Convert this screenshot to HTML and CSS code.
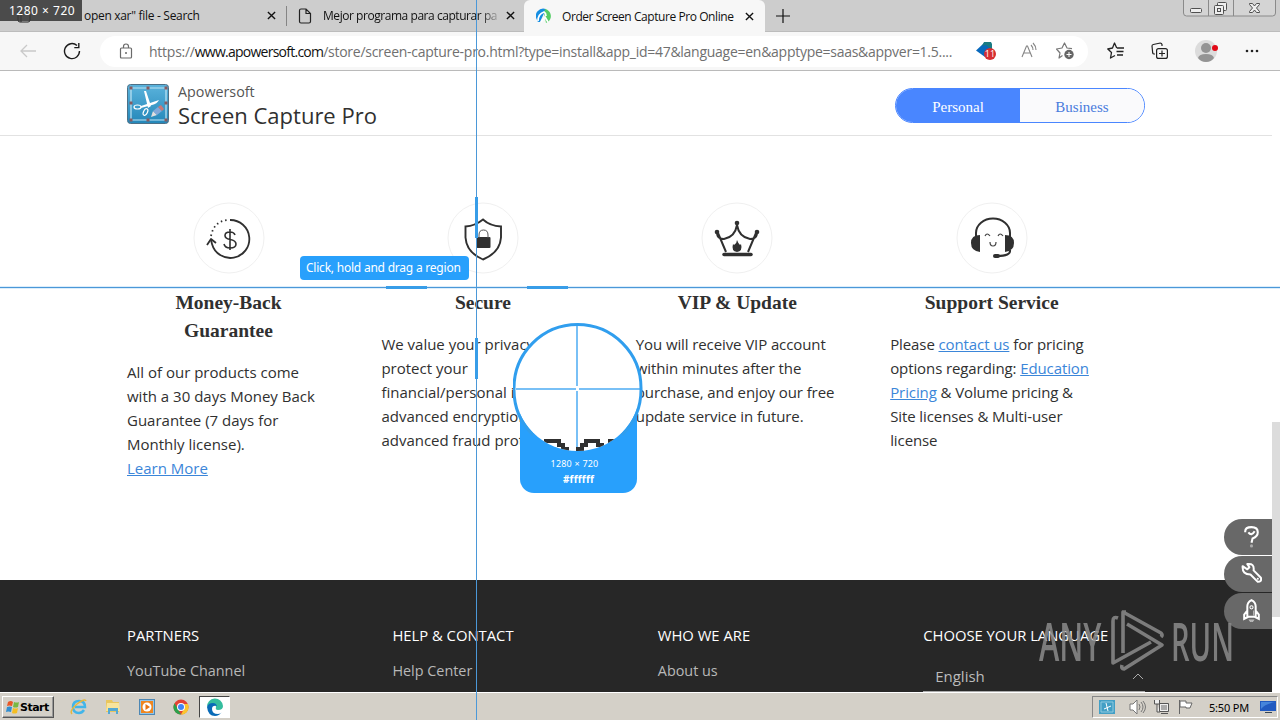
FILE: index.html
```html
<!DOCTYPE html>
<html lang="en">
<head>
  <meta charset="UTF-8">
  <title>Order Screen Capture Pro Online</title>
  <link rel="stylesheet" href="styles.css">
</head>
<body>

  <div class="tabbar">
    <div class="tab tab-first">
      <svg class="tab-actions" width="16" height="16" viewBox="0 0 16 16"><path d="M2 3v9q0 2 2 2h8q2 0 2-2V3M5 3v11" fill="none" stroke="#222"/></svg>
      <span class="tab-title t1">open xar" file - Search</span>
      <svg class="x" viewBox="0 0 10 10"><path d="M1 1l8 8M9 1l-8 8"/></svg>
    </div>
    <div class="tab tab-second">
      <svg width="14" height="16" viewBox="0 0 14 16"><path d="M1.500 2.500q0-1.500 1.500-1.500h5l4.500 4.500v8q0 1.500-1.500 1.500h-8q-1.500 0-1.500-1.500zM8 1v4.500h4.500" fill="none" stroke="#222" stroke-width="1.200"/></svg>
      <span class="tab-title t2">Mejor programa para capturar pa</span>
      <svg class="x" viewBox="0 0 10 10"><path d="M1 1l8 8M9 1l-8 8"/></svg>
    </div>
    <div class="tab tab-active">
      <svg width="16" height="16" viewBox="0 0 16 16"><path d="M1 12A7.500 7.500 0 0 1 10 1L4 14Q1 14 1 12z" fill="#168ee2"/><path d="M9 1a7.300 7.300 0 0 1 4 12l-3 2L8 5z" fill="#54cd65"/><path d="M2 13q0-7 6-9 2 1 2 4M5 14l4-5 3 5" fill="none" stroke="#fff" stroke-width="1.700"/></svg>
      <span class="tab-title t3">Order Screen Capture Pro Online</span>
      <svg class="x" viewBox="0 0 10 10"><path d="M1 1l8 8M9 1l-8 8"/></svg>
    </div>
    <svg class="new-tab" width="14" height="14" viewBox="0 0 14 14"><path d="M7 0v14M0 7h14" stroke="#111" stroke-width="1.200"/></svg>
    <svg class="window-buttons" width="94" height="17" viewBox="0 0 94 17">
      <path d="M.5 0v13q0 3 3 3h86q3 0 3-3V0M25.500 0v16M50.500 0v16" fill="#d4d4d4" stroke="#8a8a8a"/>
      <g fill="#eee" stroke="#505050"><rect x="7.500" y="8.500" width="11" height="4" rx="1"/><rect x="34.500" y="2.500" width="9" height="8" rx="1"/><rect x="31.500" y="5.500" width="9" height="9" rx="1"/><rect x="34.500" y="8.500" width="3" height="3"/><path d="M66.500 3.500h3l2 2.500 2-2.500h3v1l-3 3.500 3 3.500v1h-3l-2-2.500-2 2.500h-3v-1l3-3.500-3-3.500z"/></g>
    </svg>
  </div>

  <div class="toolbar">
    <svg class="back" width="18" height="16" viewBox="0 0 18 16"><path d="M17 8H2M8 2L2 8l6 6" fill="none" stroke="#c9c9c9" stroke-width="1.300"/></svg>
    <svg class="reload" width="18" height="18" viewBox="0 0 18 18"><path d="M16.500 9A7.500 7.500 0 1 1 14 3.500M15.800 1v4.600h-4.500" fill="none" stroke="#1c1c1c" stroke-width="1.400"/></svg>
    <div class="address">
      <svg class="lock" width="14" height="16" viewBox="0 0 14 16"><path d="M2.500 5h9q1 0 1 1v8q0 1-1 1h-9q-1 0-1-1V6q0-1 1-1zM4.500 5V3.500a2.500 2.500 0 0 1 5 0V5" fill="none" stroke="#6a6a6a" stroke-width="1.200"/><circle cx="7" cy="10" r="1" fill="#6a6a6a"/></svg>
      <span class="url"><span class="u1">https://</span><b class="u2">www.apowersoft.com</b><span class="u3">/store/screen-capture-pro.html?type=install&amp;app_id=47&amp;language=en&amp;apptype=saas&amp;appver=1.5....</span></span>
      <svg class="shopping" width="22" height="20" viewBox="0 0 22 20"><path d="M8 2h6l2 2v12H9L0 9.500z" fill="#0869bd"/><path d="M8 1h7l1 2v6l-6-5-4 1z" fill="#197b83"/><circle cx="14" cy="13" r="6" fill="#d52e32"/><text x="14" y="16" class="count">11</text></svg>
      <svg class="read-aloud" width="18" height="18" viewBox="0 0 18 18"><path d="M2 15L6.500 4h1L12 15M3.500 11h7M11 3q2 2 2 5M13 1q3 3 3 7" fill="none" stroke="#858585" stroke-width="1.100"/></svg>
      <svg class="fav-add" width="18" height="18" viewBox="0 0 18 18"><path d="M6.500 13.500L3 16l1-5-3.500-4L6 6l2.500-5L11 6l5 .7" fill="none" stroke="#777" stroke-width="1.200" stroke-linejoin="round"/><circle cx="13" cy="12.500" r="4.700" fill="#666"/><path d="M13 10v5M10.500 12.500h5" stroke="#fff"/></svg>
    </div>
    <svg class="favs" width="18" height="18" viewBox="0 0 18 18"><path d="M10 5.500H9.500L7.500 1 5.500 6 .8 7l3.700 3.500L3.500 16 8 13.500M10 6h7M9.500 9.500h7M10 13h6" fill="none" stroke="#222" stroke-width="1.300" stroke-linejoin="round"/></svg>
    <svg class="collections" width="18" height="18" viewBox="0 0 18 18"><path d="M4 12H3q-1 0-1.300-1L1 4q0-1.200 1.300-1.500l7-1.500q1.300 0 1.700 1.500V4" fill="none" stroke="#222" stroke-width="1.200"/><rect x="5.600" y="6.600" width="10.800" height="9.800" rx="2" fill="none" stroke="#222" stroke-width="1.200"/><path d="M11 8.500v6M8 11.500h6" stroke="#222" stroke-width="1.200"/></svg>
    <svg class="avatar" width="24" height="22" viewBox="0 0 24 22"><circle cx="11" cy="11" r="11" fill="#dcdcdc"/><circle cx="11" cy="8" r="5" fill="#949494"/><path d="M3 18q1-4 8-4t8 4q-3 4-8 4t-8-4z" fill="#949494"/><circle cx="20" cy="8" r="3" fill="#e20a17"/></svg>
    <svg class="dots" width="16" height="4" viewBox="0 0 16 4"><g fill="#222"><circle cx="3" cy="2" r="1.300"/><circle cx="8" cy="2" r="1.300"/><circle cx="13" cy="2" r="1.300"/></g></svg>
  </div>

  <div class="viewport">
    <div class="page">
      <header class="header">
        <svg class="logo" width="42" height="40" viewBox="0 0 42 40">
          <defs><linearGradient id="blue" x2="0" y2="1"><stop stop-color="#5bb3dc"/><stop offset="1" stop-color="#2487b9"/></linearGradient></defs>
          <rect x=".5" y=".5" width="41" height="39" rx="3" fill="url(#blue)" stroke="#4c7087"/>
          <path d="M4 4h35v32H4z" fill="none" stroke="#c0e4f3" stroke-width="1.200"/>
          <path d="M17 7l2 0 5 15-3 2zM32 16q-2 4-7 5l-11 3v-2z" fill="#fff"/>
          <ellipse cx="10.500" cy="23" rx="3.500" ry="2" fill="none" stroke="#fff" stroke-width="1.200"/><ellipse cx="18.500" cy="28" rx="2" ry="3.500" transform="rotate(25 18.500 28)" fill="none" stroke="#fff" stroke-width="1.200"/>
          <path d="M24 33l2-6 4 4z" fill="#e1dede"/><path d="M26 27l5-4 4 4-5 4z" fill="#82a8d9"/><path d="M31 23l3-2 3 4-2 2z" fill="#c97876"/>
          <g fill="#875b60"><path d="M2.500 2.500h3v3h-3zM19.500 2.500h3v3h-3zM37.500 2.500h3v3h-3zM2.500 17.500h3v3h-3zM37.500 17.500h3v3h-3zM2.500 34.500h3v3h-3zM19.500 34.500h3v3h-3zM37.500 34.500h3v3h-3z"/></g>
        </svg>
        <div class="brand">
          <div class="company">Apowersoft</div>
          <div class="product">Screen Capture Pro</div>
        </div>
        <div class="switch"><span class="personal">Personal</span><span class="business">Business</span></div>
      </header>

      <section class="features">
        <div class="feature">
          <svg class="feature-icon" viewBox="0 0 72 72"><circle cx="36" cy="36" r="35" class="ring"/><g fill="none" stroke="#303030" stroke-width="1.800"><path d="M37 18a19 19 0 1 1-18 24L18 38"/><path d="M14 43l4-6 5 4" stroke-linejoin="round"/><path d="M18 34Q21 19 35 18" stroke-dasharray="1.500 3"/><path d="M42 33q-1-3-5-3-5 0-5 3.500 0 3 5 4 6 1 6 4.500 0 4-6 4-5 0-6-4M37 27v21" stroke-width="1.600"/></g></svg>
          <h3>Money-Back<br>Guarantee</h3>
          <p>All of our products come<br>with a 30 days Money Back<br>Guarantee (7 days for<br>Monthly license).<br><a href="#">Learn More</a></p>
        </div>
        <div class="feature">
          <svg class="feature-icon" viewBox="0 0 72 72"><circle cx="36" cy="36" r="35" class="ring"/><path d="M36 17.500Q28 24 18.500 24.500v11q1 15 17.500 22 17-7 18-22v-11Q43 24 36 17.500z" fill="none" stroke="#303030" stroke-width="1.900"/><rect x="29.500" y="35" width="14" height="11" rx="1" fill="#303030"/><path d="M32 36v-3q0-5 4.500-5t4.500 5v3" fill="none" stroke="#555"/></svg>
          <h3>Secure</h3>
          <p>We value your privacy and<br>protect your<br>financial/personal info with<br>advanced encryption and<br>advanced fraud protection.</p>
        </div>
        <div class="feature feature-tight">
          <svg class="feature-icon" viewBox="0 0 72 72"><circle cx="36" cy="36" r="35" class="ring"/><g fill="#303030"><circle cx="36" cy="21" r="2.300"/><circle cx="16" cy="30" r="2.300"/><circle cx="56" cy="30" r="2.300"/><path d="M36 38q1 3 3 5l1-1q2 7-4 8-6-1-4-8l1 1q3-2 3-5z"/></g><path d="M17 31l8 19M16 32q1 5 7 5 11-2 13-14 2 12 13 14 6 0 7-5M55 31l-8 19" fill="none" stroke="#303030" stroke-width="2"/><path d="M23 52.500h27" stroke="#303030" stroke-width="3.500" stroke-linecap="round"/></svg>
          <h3>VIP &amp; Update</h3>
          <p>You will receive VIP account<br>within minutes after the<br>purchase, and enjoy our free<br>update service in future.</p>
        </div>
        <div class="feature feature-tight">
          <svg class="feature-icon" viewBox="0 0 72 72"><circle cx="36" cy="36" r="35" class="ring"/><path d="M20 35v-4a17 14.500 0 0 1 34 0v4M54 48q1 6-13 6" fill="none" stroke="#303030" stroke-width="2"/><g fill="#303030"><path d="M24 33v17q-9-1-9-9t9-8zM49 33v17q9-1 9-9t-9-8z"/><rect x="37" y="52" width="7" height="4" rx="2"/></g><path d="M29 34q2-4 5 0M42 34q2-4 5 0M34 40q0 4 3 4t3-4" fill="none" stroke="#444" stroke-width="1.200"/></svg>
          <h3>Support Service</h3>
          <p>Please <a href="#">contact us</a> for pricing<br>options regarding: <a href="#">Education</a><br><a href="#">Pricing</a> &amp; Volume pricing &amp;<br>Site licenses &amp; Multi-user<br>license</p>
        </div>
      </section>

      <footer class="footer">
        <div class="footer-col"><h4>PARTNERS</h4><a href="#">YouTube Channel</a></div>
        <div class="footer-col"><h4>HELP &amp; CONTACT</h4><a href="#">Help Center</a></div>
        <div class="footer-col"><h4>WHO WE ARE</h4><a href="#">About us</a></div>
        <div class="footer-col"><h4>CHOOSE YOUR LANGUAGE</h4>
          <div class="language"><span>English</span><svg width="12" height="8" viewBox="0 0 12 8"><path d="M1 7l5-5 5 5" fill="none" stroke="#aaa"/></svg></div>
        </div>
      </footer>
    </div>
    <div class="scrollbar"><div class="thumb"></div></div>
  </div>

  <div class="taskbar">
    <div class="start">
      <svg width="15" height="15" viewBox="0 0 15 15"><path d="M3 2q3-2 5 0L7 6Q4 5 2 6z" fill="#e95726"/><path d="M9 2q3 1 5 0l-1 5q-3 1-5 0z" fill="#78b842"/><path d="M2 7q3-1 5 0l-1 5q-3-1-5 0z" fill="#318ed1"/><path d="M8 8q3 1 5 0l-1 5q-3 1-5 0z" fill="#f5be22"/></svg>
      <span>Start</span>
    </div>
    <svg class="launch" width="18" height="18" viewBox="0 0 18 18"><path d="M14 12q-2 3-5 3-6 0-6-6t6-6q6 0 6 6H5" fill="none" stroke="#42b5e9" stroke-width="2.500"/><path d="M2 16Q-1 13 7 6q8-6 9-3" fill="none" stroke="#e7b73c" stroke-width="1.500"/></svg>
    <svg class="launch" width="18" height="18" viewBox="0 0 18 18"><path d="M2 2h6l1 2h6v10H2z" fill="#e9c65e"/><path d="M3 5h12l1 8H2z" fill="#f8e49c"/><path d="M4 10h10v6h-2v-3H6v3H4z" fill="#55a9d3"/></svg>
    <svg class="launch" width="18" height="18" viewBox="0 0 18 18"><rect x="1.500" y="1.500" width="15" height="15" fill="#91c5ea" stroke="#4d87b4"/><rect x="3" y="3" width="12" height="12" fill="#ef8620"/><circle cx="9" cy="9" r="4.500" fill="#fff"/><path d="M7.500 6l4.500 3-4.500 3z" fill="#e67312"/></svg>
    <svg class="launch" width="18" height="18" viewBox="0 0 18 18"><circle cx="9" cy="9" r="7.500" fill="#e44235"/><path d="M2.500 5.200L7 13l2 3.500A7.500 7.500 0 0 1 2.500 5.200z" fill="#2aa14c"/><path d="M9 16.500L13 9l-1-3h4a7.500 7.500 0 0 1-7 10.500z" fill="#fbc62e"/><circle cx="9" cy="9" r="4" fill="#fff"/><circle cx="9" cy="9" r="3" fill="#4285f4"/></svg>
    <div class="running"><svg width="18" height="18" viewBox="0 0 18 18"><path d="M1 9a8 8 0 0 1 16-1q0 4-5 4-3 0-2-3 0-3-4-3-4 0-5 3z" fill="#35bd9e"/><path d="M1 9q1-4 6-4 3 0 4 3-5-1-5 3 0 5 6 5 3 0 4-2-3 4-7 4-7 0-8-9z" fill="#096bb7"/></svg></div>
    <div class="tray">
      <svg width="16" height="16" viewBox="0 0 16 16"><path d="M0 1h16v14H0z" fill="#439fc5"/><path d="M2 3h12v10H2z" fill="none" stroke="#91cadf"/><path d="M7 4l2 8M12 7l-7 3" stroke="#fff"/></svg>
      <svg class="speaker" width="18" height="16" viewBox="0 0 18 16"><path d="M1 5h3l4-4v14l-4-4H1z" fill="#fff" stroke="#777"/><path d="M10 5q2 3 0 6M12 3q4 5 0 10M14 2q5 6 0 12" fill="none" stroke="#777"/></svg>
      <svg class="network" width="17" height="16" viewBox="0 0 17 16"><path d="M6.500 4.500h9v8h-9zM8 14.500h7M1.500 1v4h5V1M4 5v8h3" fill="#eee" stroke="#555"/><path d="M8 6h6v5H8z" fill="#aaa"/></svg>
      <svg class="flag" width="17" height="16" viewBox="0 0 17 16"><path d="M2.500 1v14M3 2h6v2h6l-2 5H9V8H3z" fill="#fff" stroke="#666"/></svg>
      <span class="clock">5:50 PM</span>
      <svg class="desktop" width="16" height="14" viewBox="0 0 16 14"><path d="M0 1h16v10H0z" fill="#225ac0"/><path d="M1 2h14Q5 4 1 9z" fill="#4785db"/><path d="M5 12h7v1H5z" fill="#345"/></svg>
    </div>
  </div>

  <div class="side-buttons">
    <div><svg viewBox="0 0 20 22"><path d="M4 7V6q0-4 6-4t6 5q0 4-5 6l-1 4M7 7q3 4 6-1" fill="none" stroke="#fff" stroke-width="2"/><circle cx="10" cy="20" r="1.500" fill="#aaa"/></svg></div>
    <div><svg viewBox="0 0 20 22"><path d="M1.500 4l4.500 3 2-2-2-3q7-1 6 6l7 7q1 4-3 4l-7-7Q1 12 1.500 4z" fill="none" stroke="#fff" stroke-width="1.900" stroke-linejoin="round"/><circle cx="16" cy="16" r="1" fill="#fff"/></svg></div>
    <div><svg viewBox="0 0 20 22"><path d="M6 17V7q0-4 4-6 4 2 4 6v10M6 11l-3 4v4l4-2h6l4 2v-4l-3-4" fill="none" stroke="#fff" stroke-width="1.900"/><circle cx="10" cy="8" r="1.500" fill="none" stroke="#fff"/><path d="M12 11v5M8 20h4l-2 3z" fill="#aaa" stroke="#bbb"/></svg></div>
  </div>

  <div class="watermark">
    <span class="any">ANY</span>
    <svg width="56" height="64" viewBox="0 0 56 64"><path d="M8 9q-5-2-5 3v42l38-21M13 44V3l38 21q2 2 0 4M17 15l35 21-38 24q-3 0-2-4M12 3l4 0" fill="none" stroke="#8b8b8b" stroke-width="3.600" stroke-linejoin="round"/></svg>
    <span class="run">RUN</span>
  </div>

  <div class="line-v"></div>
  <div class="line-h"></div>
  <div class="mark mark-top"></div>
  <div class="mark mark-bottom"></div>
  <div class="mark mark-left"></div>
  <div class="mark mark-right"></div>
  <div class="size-badge">1280 × 720</div>
  <div class="hint"><span>Click, hold and drag a region</span></div>
  <div class="loupe">
    <div class="loupe-info"><span>1280 × 720</span><b>#ffffff</b></div>
    <svg class="lens" width="130" height="130" viewBox="0 0 130 130">
      <defs><clipPath id="glass"><circle cx="64.500" cy="65" r="63"/></clipPath></defs>
      <circle cx="64.500" cy="65" r="63" fill="#fff"/>
      <path d="M64 3v60M64 68v60M3 66h60M66 66h61" stroke="#79c0f6" stroke-width="2"/>
      <path d="M20 112A64 64 0 0 1 1 65a63.500 63.500 0 0 1 127 0 64 64 0 0 1-19 47" fill="none" stroke="#309eee" stroke-width="3"/>
      <g clip-path="url(#glass)"><path d="M31 116h17v4h4v4h4v5h-8v-5h-4v-4H31zM71 116h16v4h4v9h-4v-5h-4v-4h-8v4h-4v5h-8v-5h4v-4h4zM95 116h16v4H95z" fill="#303030"/></g>
    </svg>
  </div>
</body>
</html>
```
FILE: styles.css
```css
* {
  box-sizing: border-box;
}

body {
  margin: 0;
  width: 1280px;
  height: 720px;
  overflow: hidden;
  display: flex;
  flex-direction: column;
  font-family: "Open Sans", sans-serif;
  color: #303030;
  background: #fff;
}

svg {
  display: block;
  flex: none;
}

a {
  color: #3b86d9;
}

/* browser chrome */
.tabbar {
  height: 32px;
  display: flex;
  align-items: center;
  background: #cdcdcd;
  border-bottom: 1px solid #bcbcbc;
  flex: none;
}

.tab {
  height: 31px;
  display: flex;
  align-items: center;
  font-size: 12px;
  color: #111;
}

.tab-first {
  width: 287px;
  padding-left: 16px;
  border-right: 1px solid #858585;
  height: 20px;
}

.tab-first .tab-title {
  margin-left: 52px;
}

.tab-second {
  width: 237px;
  padding-left: 11px;
}

.tab-second .tab-title {
  margin-left: 11px;
  -webkit-mask-image: linear-gradient(to right, #000 86%, transparent 98%);
  mask-image: linear-gradient(to right, #000 86%, transparent 98%);
}

.tab-active {
  width: 241px;
  height: 32px;
  margin-bottom: -1px;
  padding-left: 12px;
  background: #f7f7f7;
  border-radius: 6px 6px 0 0;
}

.tab-active .tab-title {
  margin-left: 10px;
}

.tab-title {
  white-space: nowrap;
  flex: none;
}

.t1 {
  width: 183px;
  letter-spacing: -0.3px;
}

.t2 {
  width: 183px;
  letter-spacing: -0.45px;
}

.t3 {
  width: 183px;
  letter-spacing: -0.43px;
}

.x {
  width: 9px;
  height: 9px;
  stroke: #111;
  stroke-width: 1.5;
}

.new-tab {
  margin-left: 11px;
}

.window-buttons {
  margin: 0 3px 14px auto;
}

.toolbar {
  height: 39px;
  display: flex;
  align-items: center;
  background: #f7f7f7;
  border-bottom: 1px solid #bababa;
  flex: none;
}

.back {
  margin-left: 19px;
}

.reload {
  margin-left: 26px;
}

.address {
  width: 988px;
  height: 31px;
  margin-left: 19px;
  padding-left: 19px;
  display: flex;
  align-items: center;
  background: #fff;
  border-radius: 16px;
}

.url {
  width: 814px;
  margin-left: 16px;
  margin-right: 13px;
  font-size: 14px;
  white-space: nowrap;
  color: #707070;
}

.url b {
  font-weight: normal;
  color: #111;
}

.u1 { letter-spacing: -0.25px; }
.u2 { letter-spacing: -0.75px; }
.u3 { letter-spacing: -0.27px; }

.count {
  fill: #fff;
  font-size: 9px;
  text-anchor: middle;
}

.read-aloud {
  margin-left: 22px;
}

.fav-add {
  margin-left: 18px;
}

.favs {
  margin-left: 19px;
}

.collections {
  margin-left: 26px;
}

.avatar {
  margin-left: 26px;
}

.dots {
  margin-left: 25px;
}

/* page */
.viewport {
  flex: 1;
  display: flex;
  min-height: 0;
}

.page {
  width: 1272px;
}

.header {
  height: 65px;
  padding: 13px 127px 0;
  display: flex;
  border-bottom: 1px solid #e2e2e2;
}

.brand {
  margin: -1px 0 0 9px;
}

.company {
  font-size: 14.3px;
  line-height: 18px;
  color: #555;
}

.product {
  margin-top: -1px;
  font-size: 22px;
  line-height: 30px;
}

.switch {
  width: 250px;
  height: 35px;
  margin: 4px 0 0 auto;
  display: flex;
  border: 1px solid #4a86ff;
  border-radius: 18px;
  overflow: hidden;
  font: 15px/37px "Liberation Serif", serif;
  text-align: center;
}

.switch span {
  flex: 1;
  color: #4a7cdc;
  background: #fafafc;
}

.switch .personal {
  color: #fff;
  background: #4986ff;
}

.features {
  height: 444px;
  padding: 66px 127px 0;
  display: grid;
  grid-template-columns: repeat(4, 203px);
  column-gap: 51.4px;
}

.feature-icon {
  width: 72px;
  height: 72px;
  margin: 0 auto;
}

.ring {
  fill: #fff;
  stroke: #f0f0f0;
}

.feature h3 {
  margin: 15px 0 15px;
  text-align: center;
  font: bold 19.5px/28px "Liberation Serif", serif;
}

.feature p {
  margin: 0;
  font-size: 15px;
  line-height: 24px;
  white-space: nowrap;
}

.feature-tight p {
  letter-spacing: -0.1px;
}

.footer {
  height: 112px;
  padding: 44px 0 0 127px;
  display: grid;
  grid-template-columns: repeat(4, 222px);
  column-gap: 43.4px;
  background: #272727;
  color: #fff;
}

.footer h4 {
  margin: 0 0 14px;
  font-size: 14.8px;
  line-height: 23px;
  font-weight: normal;
  white-space: nowrap;
}

.footer a {
  display: block;
  font-size: 14.4px;
  line-height: 20px;
  color: #b8b8b8;
  text-decoration: none;
}

.language {
  height: 31px;
  padding: 0 1px 0 12px;
  display: flex;
  align-items: center;
  justify-content: space-between;
  border-bottom: 1px solid #aaa;
  font-size: 15px;
  color: #bbb;
}

.scrollbar {
  width: 8px;
  padding-top: 351px;
}

.thumb {
  height: 195px;
  background: #dcdcdc;
}

/* taskbar */
.taskbar {
  height: 28px;
  padding: 3px 2px 1px;
  display: flex;
  align-items: center;
  background: #d4d0c8;
  box-shadow: inset 0 1px #fff;
  flex: none;
}

.start {
  width: 52px;
  height: 22px;
  padding-left: 2px;
  display: flex;
  align-items: center;
  border: 1px solid;
  border-color: #fff #555 #555 #fff;
  box-shadow: inset -1px -1px #999;
  font: bold 11px "DejaVu Sans", sans-serif;
  letter-spacing: -0.5px;
  color: #000;
}

.launch {
  margin-left: 16px;
}

.running {
  width: 31px;
  height: 22px;
  margin-left: 9px;
  padding: 1px 6px;
  background: #fff;
  border: 1px solid;
  border-color: #444 #fff #fff #444;
}

.tray {
  width: 186px;
  height: 22px;
  margin-left: auto;
  padding-left: 6px;
  display: flex;
  align-items: center;
  border: 1px solid;
  border-color: #888 #fff #fff #888;
}

.speaker {
  margin-left: 14px;
}

.network {
  margin-left: 6px;
}

.flag {
  margin-left: 7px;
}

.clock {
  width: 39px;
  margin-left: 15px;
  font: 11px "Noto Sans", sans-serif;
  letter-spacing: -0.2px;
  white-space: nowrap;
  color: #000;
}

.desktop {
  margin-left: 12px;
}

/* floating help buttons */
.side-buttons {
  position: absolute;
  top: 519px;
  right: 8px;
  width: 48px;
  display: grid;
  gap: 1px;
}

.side-buttons div {
  height: 36px;
  padding: 6px 0 0 17px;
  background: #686868;
  border-radius: 18px 0 0 18px;
}

.side-buttons svg {
  width: 21px;
  height: 23px;
}

.watermark {
  position: absolute;
  left: 1039px;
  top: 609px;
  display: flex;
  align-items: center;
  opacity: 0.85;
  color: #8b8b8b;
  font: 600 52px/62px "Open Sans", sans-serif;
}

.watermark span {
  width: 104px;
  margin-right: -33px;
  transform: scaleX(0.59);
  transform-origin: left;
}

.watermark .run {
  margin-left: 5px;
  transform: scaleX(0.56);
}

/* capture overlay */
.line-v,
.line-h {
  position: absolute;
  background: #4b98d8;
}

.line-v {
  left: 476px;
  top: 0;
  width: 1px;
  height: 720px;
}

.line-h {
  left: 0;
  top: 287px;
  width: 1280px;
  height: 1px;
  box-shadow: 0 0 0 1px rgba(110, 185, 240, 0.25);
}

.mark {
  position: absolute;
  background: #389de8;
}

.mark-top,
.mark-bottom {
  left: 475px;
  width: 3px;
  height: 41px;
}

.mark-top { top: 197px; }
.mark-bottom { top: 338px; }

.mark-left,
.mark-right {
  top: 286px;
  width: 41px;
  height: 3px;
}

.mark-left { left: 386px; }
.mark-right { left: 527px; }

.size-badge {
  position: absolute;
  left: 0;
  top: 0;
  width: 82px;
  height: 21px;
  padding-left: 9px;
  background: rgba(55, 55, 55, 0.87);
  color: #fff;
  font: 12px/21px "Noto Sans", sans-serif;
  letter-spacing: 0.5px;
}

.hint {
  position: absolute;
  left: 300px;
  top: 256px;
  width: 169px;
  height: 24px;
  padding-left: 6px;
  border-radius: 4px;
  background: #28a0fc;
  color: #fff;
  font: 12px/23px "Noto Sans", sans-serif;
  letter-spacing: -0.22px;
  white-space: nowrap;
}

.loupe {
  position: absolute;
  left: 513px;
  top: 323px;
  width: 130px;
}

.loupe-info {
  position: absolute;
  left: 7px;
  top: 66px;
  width: 117px;
  height: 104px;
  padding-top: 67px;
  border-radius: 0 0 14px 14px;
  background: #28a0fc;
  color: #fff;
  font: 9px/16px "Noto Sans", sans-serif;
  text-align: center;
}

.loupe-info span,
.loupe-info b {
  display: block;
}

.loupe-info span {
  margin-right: 8px;
  letter-spacing: 0.2px;
}

.loupe-info b {
  font-size: 10px;
  line-height: 14px;
  letter-spacing: 0.2px;
}

.lens {
  position: relative;
}
```
